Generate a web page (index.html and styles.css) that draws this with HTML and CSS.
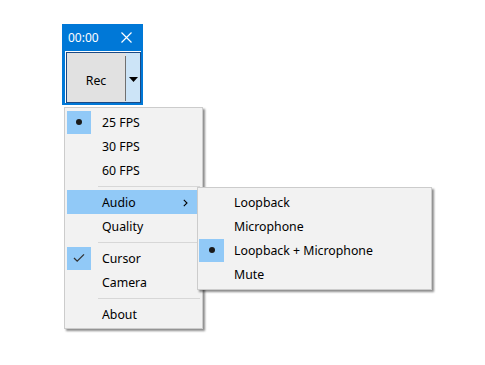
FILE: index.html
```html
<!DOCTYPE html>
<html>
<head>
<meta charset="utf-8">
<link rel="stylesheet" href="styles.css">
</head>
<body>
<div class="window">
  <div class="titlebar">
    <span class="time">00:00</span>
    <svg class="close" width="11" height="11" viewBox="0 0 11 11"><path d="M0.5 0.5 L10.5 10.5 M10.5 0.5 L0.5 10.5" stroke="#fff" stroke-width="1.2" fill="none"/></svg>
  </div>
  <div class="content">
    <div class="rec-btn">
      <div class="rec-main">Rec</div>
      <div class="rec-drop"><svg width="9" height="5" viewBox="0 0 9 5"><path d="M0 0 L9 0 L4.5 5 Z" fill="#000"/></svg></div>
    </div>
  </div>
</div>

<div class="menu main-menu">
  <div class="item"><span class="mark on"><span class="dot"></span></span><span class="label">25 FPS</span></div>
  <div class="item"><span class="mark"></span><span class="label">30 FPS</span></div>
  <div class="item"><span class="mark"></span><span class="label">60 FPS</span></div>
  <div class="sep"></div>
  <div class="item hover"><span class="mark"></span><span class="label">Audio</span>
    <svg class="arrow" width="5" height="8" viewBox="0 0 5 8"><path d="M0.8 0.8 L4 4 L0.8 7.2" stroke="#000" stroke-width="1.1" fill="none"/></svg>
  </div>
  <div class="item"><span class="mark"></span><span class="label">Quality</span></div>
  <div class="sep"></div>
  <div class="item"><span class="mark on"><svg width="12" height="10" viewBox="0 0 12 10"><path d="M1 5 L4.2 8.2 L11 1.4" stroke="#333" stroke-width="1.3" fill="none"/></svg></span><span class="label">Cursor</span></div>
  <div class="item"><span class="mark"></span><span class="label">Camera</span></div>
  <div class="sep"></div>
  <div class="item"><span class="mark"></span><span class="label">About</span></div>
</div>

<div class="menu sub-menu">
  <div class="item"><span class="mark"></span><span class="label">Loopback</span></div>
  <div class="item"><span class="mark"></span><span class="label">Microphone</span></div>
  <div class="item"><span class="mark on"><span class="dot"></span></span><span class="label">Loopback + Microphone</span></div>
  <div class="item"><span class="mark"></span><span class="label">Mute</span></div>
</div>
</body>
</html>
```

FILE: styles.css
```css
html, body {
  margin: 0;
  background: #ffffff;
}
body {
  padding: 24px 0 0 62px;
  font-family: "Noto Sans", "Open Sans", sans-serif;
  font-size: 12.3px;
  color: #000;
  position: relative;
  width: 485px;
  height: 365px;
  box-sizing: border-box;
}
.window {
  width: 81px;
  height: 81px;
  background: #0078d7;
  display: flex;
  flex-direction: column;
}
.titlebar {
  height: 27px;
  display: flex;
  align-items: center;
  justify-content: space-between;
  padding: 0 11px 0 6px;
  color: #fff;
  font-size: 12px;
}
.titlebar .time {
  margin-top: -1px;
}
.close {
  margin-top: -1px;
}
.content {
  margin: 0 2px 2px 3px;
  flex: 1;
  background: #ffffff;
  padding: 1px 0 0 1px;
  display: flex;
}
.rec-btn {
  flex: 1;
  border: 1px solid #1b4a85;
  background: #e1e1e1;
  display: flex;
}
.rec-main {
  flex: 1;
  display: flex;
  align-items: center;
  justify-content: center;
  padding-top: 3px;
  border-right: 1px solid #707070;
  margin: 3px 0 1px 0;
}
.rec-drop {
  width: 14px;
  background: #cce4f7;
  display: flex;
  align-items: center;
  justify-content: center;
  padding-top: 3px;
}
.menu {
  position: absolute;
  background: #f2f2f2;
  border: 1px solid #cccccc;
  box-shadow: 2px 2px 2px rgba(0, 0, 0, 0.45);
  box-sizing: border-box;
}
.main-menu {
  left: 64px;
  top: 107px;
  width: 139px;
  padding: 2px 4px 2px 2px;
}
.sub-menu {
  left: 197px;
  top: 187px;
  width: 235px;
  padding: 2px 4px 3px 1px;
}
.item {
  height: 24px;
  display: flex;
  align-items: center;
  position: relative;
}
.item.hover {
  background: #91c9f7;
}
.mark {
  width: 24px;
  height: 23px;
  display: flex;
  align-items: center;
  justify-content: center;
  flex: none;
}
.mark.on {
  background: #91c9f7;
}
.sub-menu .mark {
  width: 25px;
}
.dot {
  width: 6px;
  height: 6px;
  border-radius: 50%;
  background: #1a1a1a;
}
.label {
  padding-left: 11px;
}
.sub-menu .label {
  padding-left: 10px;
}
.arrow {
  position: absolute;
  right: 10px;
  top: 9px;
}
.sep {
  height: 8px;
  position: relative;
}
.sep::after {
  content: "";
  position: absolute;
  left: 31px;
  right: -2px;
  top: 4px;
  height: 1px;
  background: #d7d7d7;
}
```
